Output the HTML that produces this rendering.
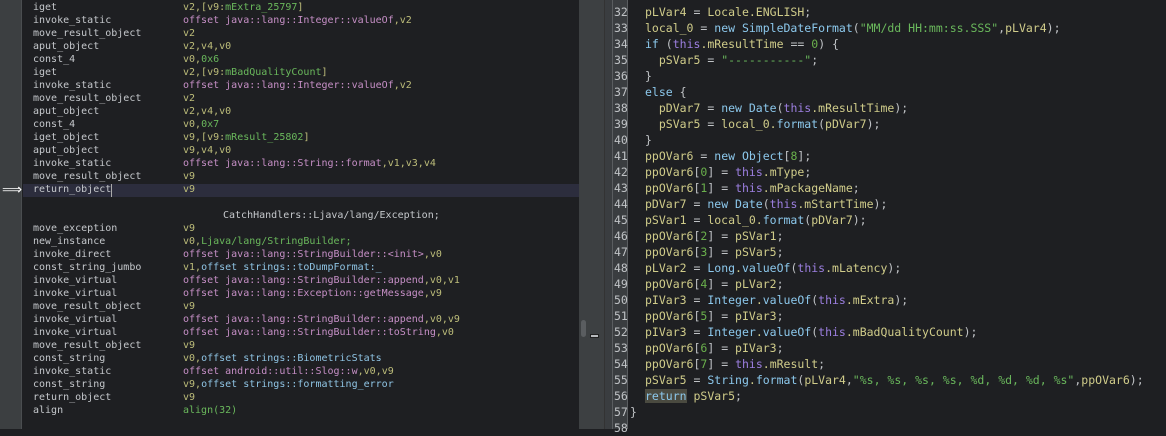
<!DOCTYPE html>
<html><head><meta charset="utf-8"><style>
*{margin:0;padding:0;box-sizing:border-box}
body{width:1166px;height:429px;overflow:hidden;background:#1e1f22;font-family:"DejaVu Sans Mono","Liberation Mono",monospace;position:relative}
.lg{position:absolute;left:0;top:0;width:22px;height:429px;background:#3c3f41;border-right:1px solid #4a4d50}
.lp{position:absolute;left:23px;top:0;width:556px;height:429px;background:#1e1f22}
.ln{position:absolute;left:33px;font-size:10px;line-height:13px;color:#c5c8cc;white-space:pre}
.op{position:absolute;left:183px;font-size:10px;line-height:13px;white-space:pre;color:#bdbd7a}
.o{color:#c68fc6}.g{color:#6ab85c}.b{color:#8fc4e4}
.sb{position:absolute;left:579px;top:0;width:33px;height:429px;background:#3d4042}
.sb2{position:absolute;left:604px;top:0;width:8px;height:429px;background:#3a3d40;border-left:1px solid #333}
.nums{position:absolute;left:612px;top:0;width:16px;height:429px;background:#3a3d40;border-left:1px solid #5a5d60;border-right:1px solid #5a5d60}
.nl{position:absolute;left:614px;font-size:11.5px;line-height:16px;color:#c0c3c6}
.cl{position:absolute;left:645px;font-size:11.5px;line-height:16px;color:#d0cc8a;white-space:pre}
.k{color:#8cc8ec}.t{color:#9c7fe0}.n{color:#6ab04c}.s{color:#6ab85c}.p{color:#c0c3c6}
</style></head><body>
<div class="lg"></div>
<div class="lp"></div>
<div style="position:absolute;left:23px;top:184px;width:556px;height:13px;background:#2c2d3d"></div>
<div style="position:absolute;left:111px;top:184px;width:1px;height:13px;background:#aaa"></div>
<div style="position:absolute;left:2px;top:185px;color:#fff;font-size:14px;line-height:10px">⟹</div>
<div class="sb"></div><div class="sb2"></div>
<div style="position:absolute;left:581px;top:320px;width:5px;height:17px;border-radius:3px;background:#5a5d60"></div>
<div style="position:absolute;left:590px;top:334px;width:9px;height:4px;background:#b8bbbe;border:1px solid #222"></div>
<div class="nums"></div>

<div class="ln" style="top:1px">iget
invoke_static
move_result_object
aput_object
const_4
iget
invoke_static
move_result_object
aput_object
const_4
iget_object
aput_object
invoke_static
move_result_object
return_object</div>
<div class="op" style="top:1px">v2,[v9:<span class="g">mExtra_25797</span>]
<span class="o">offset java::lang::Integer::valueOf</span>,v2
v2
v2,v4,v0
v0,<span class="g">0x6</span>
v2,[v9:<span class="g">mBadQualityCount</span>]
<span class="o">offset java::lang::Integer::valueOf</span>,v2
v2
v2,v4,v0
v0,<span class="g">0x7</span>
v9,[v9:<span class="g">mResult_25802</span>]
v9,v4,v0
<span class="o">offset java::lang::String::format</span>,v1,v3,v4
v9
v9</div>
<div class="ln" style="top:209px;left:223px">CatchHandlers::Ljava/lang/Exception;</div>
<div class="ln" style="top:222px">move_exception
new_instance
invoke_direct
const_string_jumbo
invoke_virtual
invoke_virtual
move_result_object
invoke_virtual
invoke_virtual
move_result_object
const_string
invoke_static
const_string
return_object
align</div>
<div class="op" style="top:222px">v9
v0,<span class="g">Ljava/lang/StringBuilder;</span>
<span class="o">offset java::lang::StringBuilder::&lt;init&gt;</span>,v0
v1,<span class="b">offset strings::toDumpFormat:_</span>
<span class="o">offset java::lang::StringBuilder::append</span>,v0,v1
<span class="o">offset java::lang::Exception::getMessage</span>,v9
v9
<span class="o">offset java::lang::StringBuilder::append</span>,v0,v9
<span class="o">offset java::lang::StringBuilder::toString</span>,v0
v9
v0,<span class="b">offset strings::BiometricStats</span>
<span class="o">offset android::util::Slog::w</span>,v0,v9
v9,<span class="b">offset strings::formatting_error</span>
v9
<span class="g">align(32)</span></div>

<div class="nl" style="top:4px">32<br>33<br>34<br>35<br>36<br>37<br>38<br>39<br>40<br>41<br>42<br>43<br>44<br>45<br>46<br>47<br>48<br>49<br>50<br>51<br>52<br>53<br>54<br>55<br>56<br>57<br>58</div>
<div class="cl" style="top:4px">pLVar4 <span class="p">=</span> Locale.ENGLISH<span class="p">;</span>
local_0 <span class="p">=</span> <span class="k">new SimpleDateFormat</span><span class="p">(</span><span class="s">"MM/dd HH:mm:ss.SSS"</span><span class="p">,</span>pLVar4<span class="p">);</span>
<span class="k">if</span> <span class="p">(</span><span class="t">this</span>.mResultTime <span class="p">==</span> <span class="n">0</span><span class="p">) {</span>
  pSVar5 <span class="p">=</span> <span class="s">"-----------"</span><span class="p">;</span>
<span class="p">}</span>
<span class="k">else</span> <span class="p">{</span>
  pDVar7 <span class="p">=</span> <span class="k">new Date</span><span class="p">(</span><span class="t">this</span>.mResultTime<span class="p">);</span>
  pSVar5 <span class="p">=</span> local_0.<span class="k">format</span><span class="p">(</span>pDVar7<span class="p">);</span>
<span class="p">}</span>
ppOVar6 <span class="p">=</span> <span class="k">new Object</span><span class="p">[</span><span class="n">8</span><span class="p">];</span>
ppOVar6<span class="p">[</span><span class="n">0</span><span class="p">] =</span> <span class="t">this</span>.mType<span class="p">;</span>
ppOVar6<span class="p">[</span><span class="n">1</span><span class="p">] =</span> <span class="t">this</span>.mPackageName<span class="p">;</span>
pDVar7 <span class="p">=</span> <span class="k">new Date</span><span class="p">(</span><span class="t">this</span>.mStartTime<span class="p">);</span>
pSVar1 <span class="p">=</span> local_0.<span class="k">format</span><span class="p">(</span>pDVar7<span class="p">);</span>
ppOVar6<span class="p">[</span><span class="n">2</span><span class="p">] =</span> pSVar1<span class="p">;</span>
ppOVar6<span class="p">[</span><span class="n">3</span><span class="p">] =</span> pSVar5<span class="p">;</span>
pLVar2 <span class="p">=</span> <span class="k">Long</span>.<span class="k">valueOf</span><span class="p">(</span><span class="t">this</span>.mLatency<span class="p">);</span>
ppOVar6<span class="p">[</span><span class="n">4</span><span class="p">] =</span> pLVar2<span class="p">;</span>
pIVar3 <span class="p">=</span> <span class="k">Integer</span>.<span class="k">valueOf</span><span class="p">(</span><span class="t">this</span>.mExtra<span class="p">);</span>
ppOVar6<span class="p">[</span><span class="n">5</span><span class="p">] =</span> pIVar3<span class="p">;</span>
pIVar3 <span class="p">=</span> <span class="k">Integer</span>.<span class="k">valueOf</span><span class="p">(</span><span class="t">this</span>.mBadQualityCount<span class="p">);</span>
ppOVar6<span class="p">[</span><span class="n">6</span><span class="p">] =</span> pIVar3<span class="p">;</span>
ppOVar6<span class="p">[</span><span class="n">7</span><span class="p">] =</span> <span class="t">this</span>.mResult<span class="p">;</span>
pSVar5 <span class="p">=</span> <span class="k">String</span>.<span class="k">format</span><span class="p">(</span>pLVar4<span class="p">,</span><span class="s">"%s, %s, %s, %s, %d, %d, %d, %s"</span><span class="p">,</span>ppOVar6<span class="p">);</span>
<span class="k" style="background:#4a4a40">return</span> pSVar5<span class="p">;</span></div>
<div class="cl p" style="top:404px;left:630px">}</div>
</body></html>
